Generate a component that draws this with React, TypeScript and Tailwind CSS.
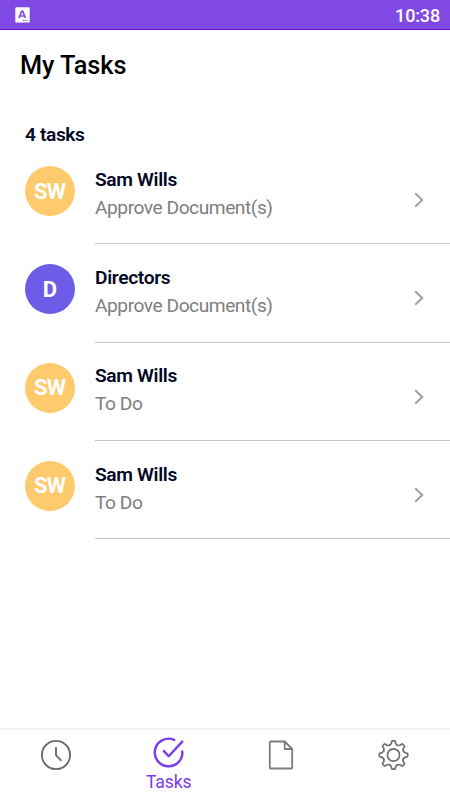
import React from "react";

type Task = { initials: string; name: string; action: string; color: string };

const tasks: Task[] = [
  { initials: "SW", name: "Sam Wills", action: "Approve Document(s)", color: "bg-[#fdcb6e]" },
  { initials: "D", name: "Directors", action: "Approve Document(s)", color: "bg-[#6c5ce7]" },
  { initials: "SW", name: "Sam Wills", action: "To Do", color: "bg-[#fdcb6e]" },
  { initials: "SW", name: "Sam Wills", action: "To Do", color: "bg-[#fdcb6e]" },
];

const toothAngles = [0, 45, 90, 135, 180, 225, 270, 315];

function StatusBar() {
  return (
    <header className="flex h-[30px] shrink-0 items-center justify-between border-b border-[#6a11d0] bg-[#8049e5] pl-[15px] pr-[10px] text-white">
      <svg width="15" height="16" viewBox="0 0 15 16">
        <rect x="0.3" y="0.2" width="14.4" height="15.4" rx="1.2" fill="#fff" />
        <path d="M4 11 6.6 4.4H7.8L10.4 11M5.2 9H9.2" fill="none" stroke="#8049e5" strokeWidth="1.6" />
        <path d="M7.8 13.4h5.2" stroke="#8049e5" strokeWidth="1" strokeDasharray="1.2 .7" />
      </svg>
      <span className="pt-[2px] text-[18px] leading-5 font-medium tracking-[-0.15px]">10:38</span>
    </header>
  );
}

function TaskRow({ task }: { task: Task }) {
  return (
    <li className="flex h-[98.3px] pl-[25px]">
      <div
        className={`mt-5 flex size-[50px] shrink-0 items-center justify-center rounded-full pr-px text-[22px] font-bold tracking-[-0.8px] text-white ${task.color}`}
      >
        {task.initials}
      </div>
      <div className="ml-5 flex grow justify-between border-b border-[#c4c4c6] pr-[25px]">
        <div className="pt-[19.9px]">
          <p className="text-[19.2px] leading-[28px] font-semibold tracking-[-0.35px] text-[#020824]">{task.name}</p>
          <p className="text-[19.2px] leading-[28px] tracking-[-0.47px] text-[#7e7e7e]">{task.action}</p>
        </div>
        <svg className="mt-[45px]" width="12" height="18" viewBox="0 0 12 18" fill="none" stroke="#9aa1ab" strokeWidth="2">
          <path d="M2.2 2.2 9.2 9 2.2 15.8" />
        </svg>
      </div>
    </li>
  );
}

function ClockIcon() {
  return (
    <svg width="32" height="32" viewBox="-16 -16 32 32" fill="none" stroke="#6b6b6b" strokeWidth="1.9" strokeLinecap="round" strokeLinejoin="round">
      <circle r="14.1" />
      <path d="M0-7.2V.3L4.8 5.2" />
    </svg>
  );
}

function CheckIcon() {
  return (
    <svg width="32" height="32" viewBox="-15.5 -15.5 32 32" fill="none" stroke="#7c3aed" strokeWidth="2.4" strokeLinecap="round" strokeLinejoin="round">
      <path d="M5.6-12.6A13.8 13.8 0 1 0 13.8-1" />
      <path d="M-4.6-1.4.2 3.7 13.8-10.9" />
    </svg>
  );
}

function FileIcon() {
  return (
    <svg width="32" height="32" viewBox="-16 -16 32 32" fill="none" stroke="#7d7d7d" strokeWidth="1.8" strokeLinejoin="round">
      <path d="M3.7-13.5H-10.2Q-11.2-13.5-11.2-12.5V12.5Q-11.2 13.5-10.2 13.5H10.2Q11.2 13.5 11.2 12.5V-6L3.7-13.5V-6H11.2" />
    </svg>
  );
}

function GearIcon() {
  return (
    <svg width="32" height="32" viewBox="-15.5 -16 32 32" fill="none" stroke="#6f6f6f" strokeWidth="1.7" strokeLinecap="round" strokeLinejoin="round">
      <circle r="6.1" />
      {toothAngles.map((angle) => (
        <path
          key={angle}
          transform={`rotate(${angle})`}
          d="M-4.06-9.8C-3.1-10.2-2.4-10.8-2.1-12L-1.8-13.6Q-1.6-14.2-1.1-14.2H1.1Q1.6-14.2 1.8-13.6L2.1-12C2.4-10.8 3.1-10.2 4.06-9.8"
        />
      ))}
    </svg>
  );
}

export default function App() {
  return (
    <div className="flex h-[800px] w-[450px] flex-col overflow-hidden bg-white font-[Roboto,sans-serif]">
      <StatusBar />
      <h1 className="ml-5 mt-[21px] text-[25.3px] leading-[30px] font-medium tracking-[-0.05px] text-black">My Tasks</h1>
      <main className="mt-[40px] grow">
        <h2 className="ml-[25px] text-[19.2px] leading-[28px] font-semibold tracking-[-0.4px] text-[#020824]">4 tasks</h2>
        <ul className="-mt-[3px]">
          {tasks.map((task, i) => (
            <TaskRow key={i} task={task} />
          ))}
        </ul>
      </main>
      <nav className="grid h-[72px] shrink-0 grid-cols-4 border-t-2 border-[#f3f3f3]">
        <div className="flex justify-center pt-[9px]"><ClockIcon /></div>
        <div className="flex flex-col items-center pt-[7px]">
          <CheckIcon />
          <span className="mt-[3px] text-[17.6px] leading-5 tracking-[-0.1px] text-[#7c3aed]">Tasks</span>
        </div>
        <div className="flex justify-center pt-[9px]"><FileIcon /></div>
        <div className="flex justify-center pt-[9px]"><GearIcon /></div>
      </nav>
    </div>
  );
}
